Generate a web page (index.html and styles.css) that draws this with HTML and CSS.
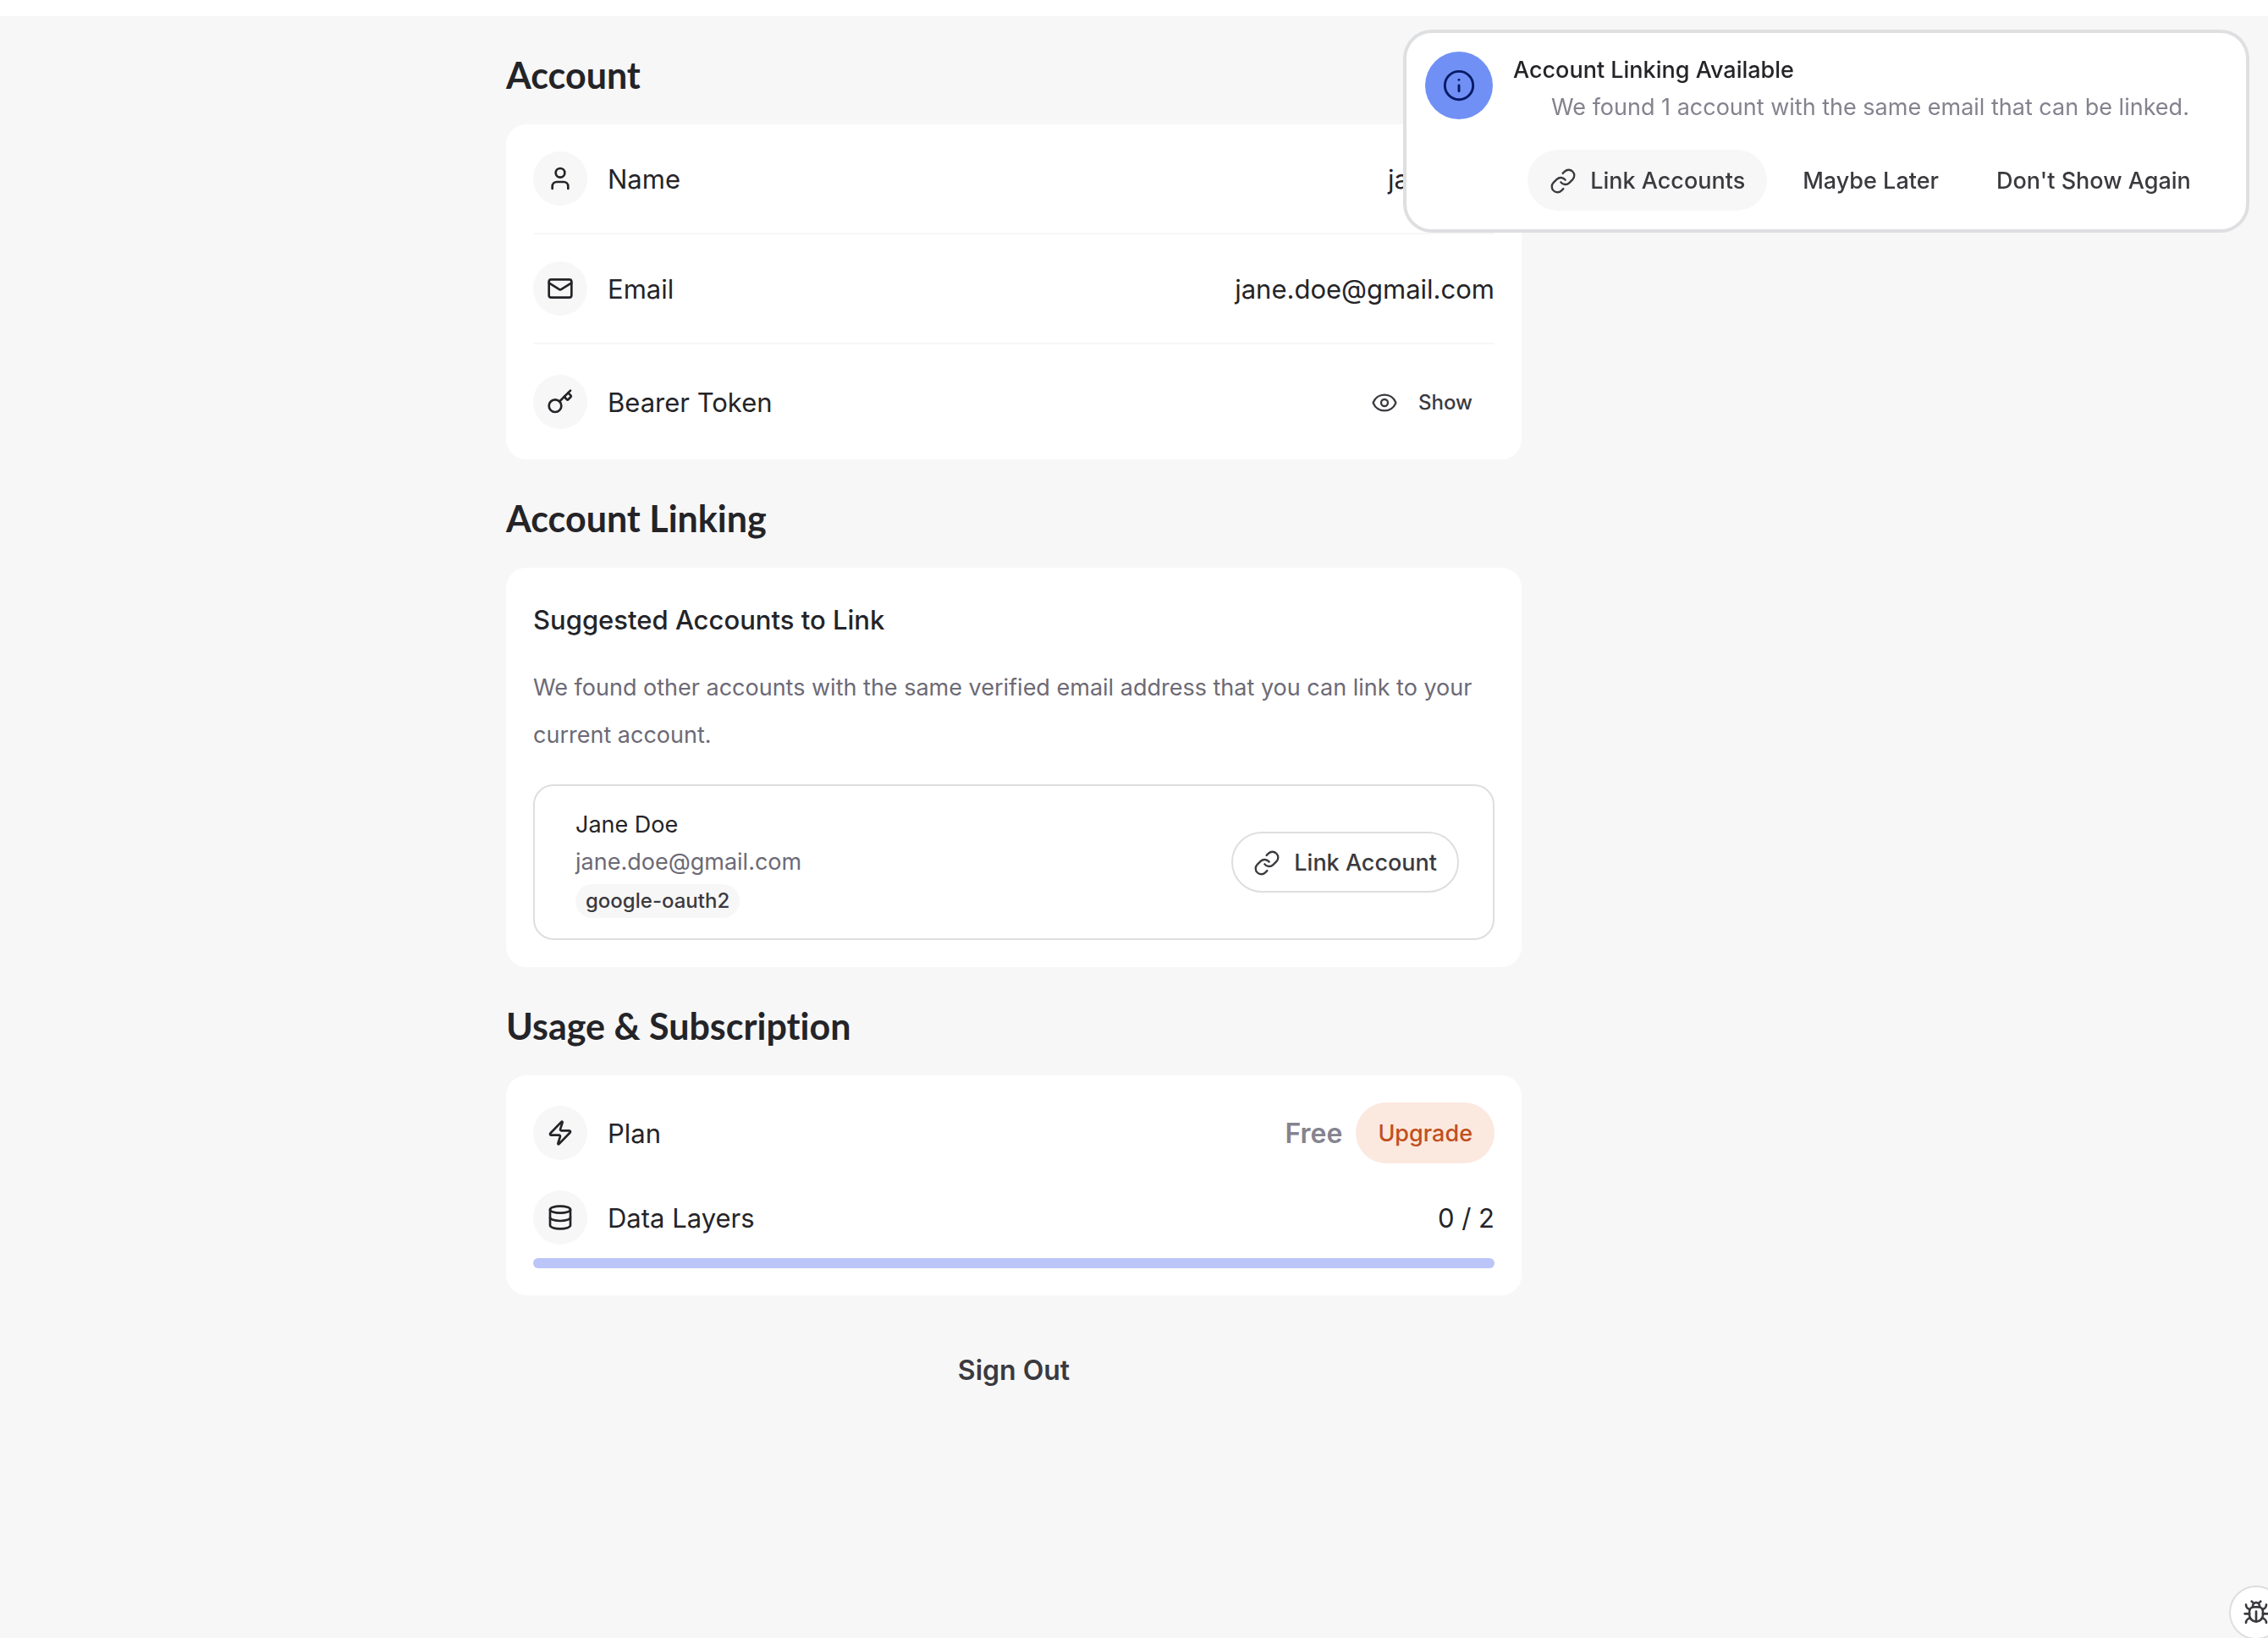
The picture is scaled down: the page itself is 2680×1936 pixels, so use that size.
FILE: index.html
```html
<!DOCTYPE html>
<html lang="en">
<head>
<meta charset="utf-8">
<meta name="viewport" content="width=device-width, initial-scale=1">
<title>Account</title>
<link rel="stylesheet" href="styles.css">
</head>
<body>
<svg class="sprite" aria-hidden="true">
  <symbol id="i-link" viewBox="0 0 24 24"><path d="M10 13a5 5 0 0 0 7.54.54l3-3a5 5 0 0 0-7.07-7.07l-1.72 1.71"/><path d="M14 11a5 5 0 0 0-7.54-.54l-3 3a5 5 0 0 0 7.07 7.07l1.71-1.71"/></symbol>
</svg>
<header class="topbar"></header>
<main class="page">
  <div class="column">
    <section>
      <h2 class="heading">Account</h2>
      <div class="card">
        <div class="row">
          <span class="badge"><svg class="icon" viewBox="0 0 24 24"><path d="M19 21v-2a4 4 0 0 0-4-4H9a4 4 0 0 0-4 4v2"/><circle cx="12" cy="7" r="4"/></svg></span>
          <span class="label">Name</span>
          <span class="value">jane.doe</span>
        </div>
        <hr class="divider">
        <div class="row">
          <span class="badge"><svg class="icon" viewBox="0 0 24 24"><rect x="2" y="4" width="20" height="16" rx="2"/><path d="m22 7-8.97 5.7a1.94 1.94 0 0 1-2.06 0L2 7"/></svg></span>
          <span class="label">Email</span>
          <span class="value">jane.doe@gmail.com</span>
        </div>
        <hr class="divider">
        <div class="row">
          <span class="badge"><svg class="icon" viewBox="0 0 24 24"><circle cx="7.5" cy="15.5" r="5.5"/><path d="m21 2-9.6 9.6"/><path d="m15.5 7.5 2.3 2.3a1 1 0 0 0 1.4 0l2.1-2.1a1 1 0 0 0 0-1.4L19 4"/></svg></span>
          <span class="label">Bearer Token</span>
          <button class="button small" type="button"><svg class="icon" viewBox="0 0 24 24"><path d="M2.06 12.35a1 1 0 0 1 0-.7 10.75 10.75 0 0 1 19.88 0 1 1 0 0 1 0 .7 10.75 10.75 0 0 1-19.88 0"/><circle cx="12" cy="12" r="3"/></svg>Show</button>
        </div>
      </div>
    </section>

    <section>
      <h2 class="heading">Account Linking</h2>
      <div class="card">
        <h3 class="subheading">Suggested Accounts to Link</h3>
        <p class="description">We found other accounts with the same verified email address that you can link to your current account.</p>
        <div class="suggestion">
          <div class="identity">
            <span class="identity-name">Jane Doe</span>
            <span class="identity-email">jane.doe@gmail.com</span>
            <span class="tag">google-oauth2</span>
          </div>
          <button class="button outline" type="button"><svg class="icon"><use href="#i-link"/></svg>Link Account</button>
        </div>
      </div>
    </section>

    <section>
      <h2 class="heading">Usage &amp; Subscription</h2>
      <div class="card">
        <div class="row">
          <span class="badge"><svg class="icon" viewBox="0 0 24 24"><path d="M4 14a1 1 0 0 1-.78-1.63l9.9-10.2a.5.5 0 0 1 .86.46l-1.92 6.02A1 1 0 0 0 13 10h7a1 1 0 0 1 .78 1.63l-9.9 10.2a.5.5 0 0 1-.86-.46l1.92-6.02A1 1 0 0 0 11 14z"/></svg></span>
          <span class="label">Plan</span>
          <span class="plan">Free</span>
          <button class="button accent" type="button">Upgrade</button>
        </div>
        <div class="row quota">
          <span class="badge"><svg class="icon" viewBox="0 0 24 24"><ellipse cx="12" cy="5" rx="9" ry="3"/><path d="M3 5v14a9 3 0 0 0 18 0V5"/><path d="M3 12a9 3 0 0 0 18 0"/></svg></span>
          <span class="label">Data Layers</span>
          <span class="value">0 / 2</span>
        </div>
        <div class="meter" role="progressbar" aria-label="Data Layers" aria-valuemin="0" aria-valuemax="2" aria-valuenow="0"></div>
      </div>
    </section>

    <button class="signout" type="button">Sign Out</button>
  </div>
</main>

<aside class="toast" role="status">
  <span class="toast-badge"><svg class="icon" viewBox="0 0 24 24"><circle cx="12" cy="12" r="10"/><path d="M12 16v-4"/><path d="M12 8h.01"/></svg></span>
  <div class="toast-body">
    <h4 class="toast-title">Account Linking Available</h4>
    <p class="toast-text">We found 1 account with the same email that can be linked.</p>
    <div class="toast-actions">
      <button class="button filled" type="button"><svg class="icon"><use href="#i-link"/></svg>Link Accounts</button>
      <button class="button" type="button">Maybe Later</button>
      <button class="button" type="button">Don't Show Again</button>
    </div>
  </div>
</aside>

<button class="bug" type="button" aria-label="Report a bug"><svg class="icon" viewBox="0 0 24 24"><path d="m8 2 1.88 1.88"/><path d="M14.12 3.88 16 2"/><path d="M9 7.13v-1a3 3 0 1 1 6 0v1"/><path d="M12 20c-3.3 0-6-2.7-6-6v-3a4 4 0 0 1 4-4h4a4 4 0 0 1 4 4v3c0 3.3-2.7 6-6 6"/><path d="M12 20v-9"/><path d="M6.53 9C4.6 8.8 3 7.1 3 5"/><path d="M6 13H2"/><path d="M3 21c0-2.1 1.7-3.9 3.8-4"/><path d="M20.97 5c0 2.1-1.6 3.8-3.5 4"/><path d="M22 13h-4"/><path d="M17.2 17c2.1.1 3.8 1.9 3.8 4"/></svg></button>
</body>
</html>
```
FILE: styles.css
```css
*,
*::before,
*::after {
  box-sizing: border-box;
}

body {
  margin: 0;
  min-height: 100vh;
  overflow-x: hidden;
  background: #f7f7f7;
  color: #242428;
  font-family: Inter, "Liberation Sans", sans-serif;
  font-size: 31px;
  line-height: 48px;
}

h2, h3, h4, p {
  margin: 0;
}

button {
  font: inherit;
  color: inherit;
  cursor: pointer;
}

.sprite {
  position: absolute;
  width: 0;
  height: 0;
}

.icon {
  flex: none;
  width: 32px;
  height: 32px;
  fill: none;
  stroke: currentColor;
  stroke-width: 1.75;
  stroke-linecap: round;
  stroke-linejoin: round;
}

.topbar {
  height: 19px;
  background: #fff;
}

.page {
  padding-right: 284px;
}

.column {
  display: flex;
  flex-direction: column;
  max-width: 1200px;
  margin: 0 auto;
}

.heading {
  padding: 46px 0 34px;
  font-family: Lato, Inter, sans-serif;
  font-size: 43px;
  font-weight: 700;
  font-variant-ligatures: none;
}

.card {
  padding: 32px;
  border-radius: 24px;
  background: #fff;
}

.row {
  display: flex;
  align-items: center;
}

.badge {
  display: grid;
  place-items: center;
  width: 64px;
  height: 64px;
  margin-right: 24px;
  border-radius: 50%;
  background: #f7f7f7;
}

.badge .icon,
.bug .icon {
  stroke-width: 2;
}

.label {
  flex: 1;
}

.label,
.value,
.plan {
  padding-top: 2px;
}

.divider {
  height: 2px;
  margin: 32px 0;
  border: 0;
  background: #f7f7f7;
}

.button {
  display: inline-flex;
  align-items: center;
  gap: 16px;
  height: 72px;
  padding: 2px 24px 0;
  border: 2px solid transparent;
  border-radius: 36px;
  background: transparent;
  color: #3a3a3f;
  font-size: 27px;
  font-weight: 500;
  white-space: nowrap;
}

.small {
  gap: 24px;
  font-size: 24px;
}

.outline {
  border-color: #dedee0;
}

.filled {
  background: #f7f7f7;
}

.accent {
  background: #fbe8df;
  color: #c0501c;
}

.subheading {
  padding-top: 2px;
  font-size: 31px;
  font-weight: 500;
  line-height: 56px;
}

.description {
  margin: 24px 0 30px;
  color: #6c6a76;
  font-size: 27px;
  line-height: 56px;
}

.suggestion {
  display: flex;
  align-items: center;
  justify-content: space-between;
  padding: 24px 40px 24px 48px;
  border: 2px solid #dedee0;
  border-radius: 24px;
}

.identity {
  display: flex;
  flex-direction: column;
  align-items: flex-start;
  font-size: 27px;
  line-height: 44px;
}

.identity-email {
  color: #6c6a76;
}

.tag {
  margin-top: 4px;
  padding: 0 12px;
  border-radius: 20px;
  background: #f7f7f7;
  color: #3a3a3f;
  font-size: 24px;
  font-weight: 500;
  line-height: 40px;
}

.plan {
  margin-right: 16px;
  color: #85838f;
  font-size: 32px;
  font-weight: 600;
}

.quota {
  margin: 32px 0 16px;
}

.meter {
  height: 12px;
  border-radius: 6px;
  background: #bbc5f8;
}

.signout {
  align-self: center;
  height: 80px;
  margin-top: 48px;
  padding: 2px 32px 0;
  border: 0;
  background: transparent;
  color: #3a3a3f;
  font-size: 32px;
  font-weight: 600;
}

.toast {
  position: fixed;
  top: 37px;
  right: 24px;
  display: flex;
  gap: 24px;
  width: 996px;
  padding: 22px;
  border: 2px solid #dedfe1;
  border-radius: 32px;
  background: #fff;
  box-shadow: 0 0 0 2px #dedfe1;
  font-size: 27px;
  line-height: 44px;
}

.toast-badge {
  display: grid;
  flex: none;
  place-items: center;
  width: 80px;
  height: 80px;
  border-radius: 50%;
  background: #7090f5;
  color: #071a66;
}

.toast-badge .icon {
  width: 40px;
  height: 40px;
}

.toast-body {
  flex: 1;
}

.toast-title {
  font-size: 27px;
  font-weight: 500;
}

.toast-text {
  color: #84828e;
  text-align: center;
}

.toast-actions {
  display: flex;
  justify-content: center;
  gap: 16px;
  margin-top: 28px;
}

.bug {
  position: fixed;
  right: -18px;
  bottom: -2px;
  display: grid;
  place-items: center;
  width: 64px;
  height: 64px;
  padding: 0;
  border: 2px solid #dedee0;
  border-radius: 50%;
  background: #fff;
  color: #3a3a3f;
}
```
